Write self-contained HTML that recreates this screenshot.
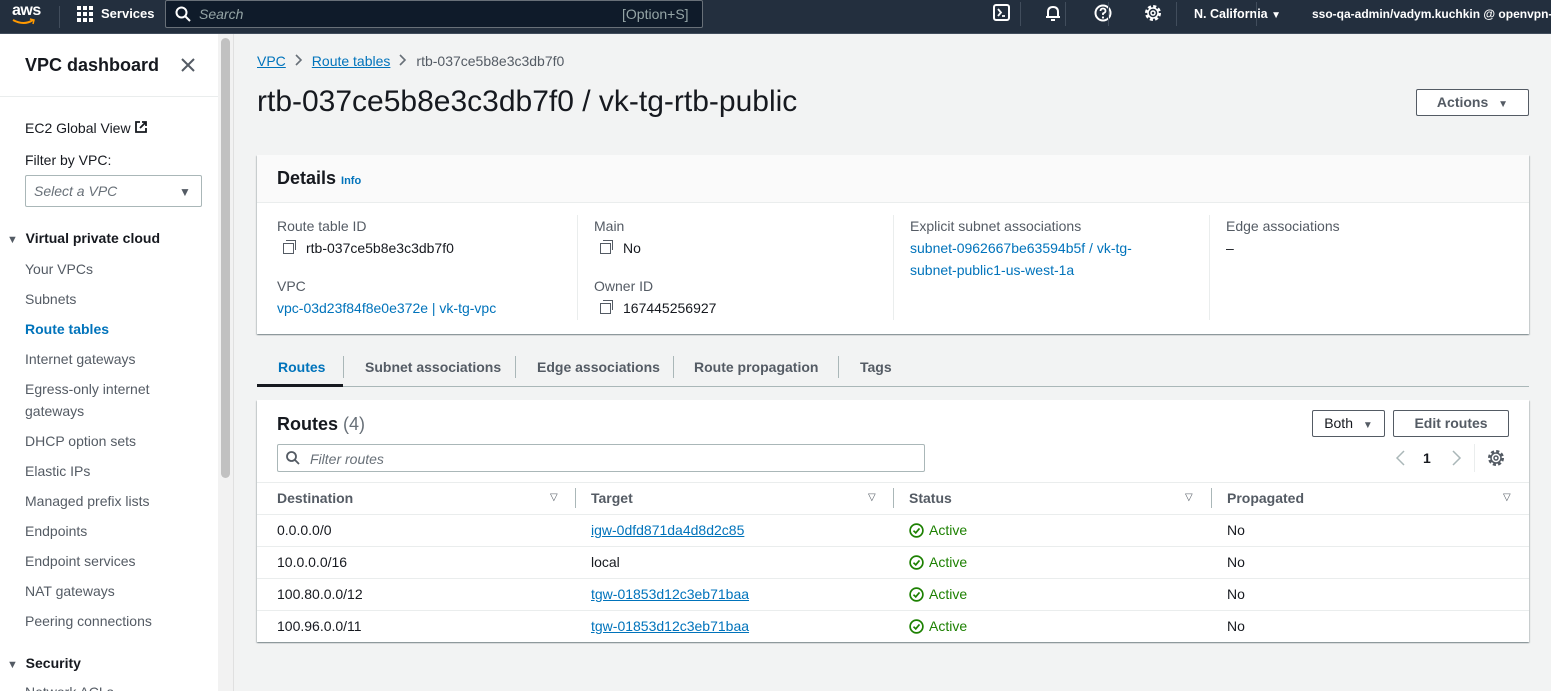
<!DOCTYPE html>
<html><head><meta charset="utf-8"><style>
*{box-sizing:border-box;margin:0;padding:0}
body{width:1551px;height:691px;overflow:hidden;background:#f2f3f3;font-family:"Liberation Sans",sans-serif;font-size:14px;color:#16191f;position:relative}
.a{position:absolute;white-space:nowrap}
.top{position:absolute;left:0;top:0;width:1551px;height:34px;background:#232f3e;border-bottom:1px solid #414d5c;color:#fff}
.lnk{color:#0073bb}
.ul{text-decoration:underline}
.side{position:absolute;left:0;top:34px;width:218px;height:657px;background:#fff;overflow:hidden}
.lbl{color:#545b64}
.b{font-weight:bold}
.sep{position:absolute;width:1px;background:#eaeded}
.card{position:absolute;background:#fff;box-shadow:0 1px 1px rgba(0,28,36,.3),1px 1px 1px rgba(0,28,36,.15),-1px 1px 1px rgba(0,28,36,.15)}
.btn{position:absolute;border:1px solid #545b64;border-radius:2px;background:#fff;font-weight:bold;color:#545b64;text-align:center}
.hl{position:absolute;height:1px;background:#eaeded}
.chk{display:inline-block;width:15px;height:15px;vertical-align:-3px;margin-right:5px}
.cp{display:inline-block;width:11px;height:11px;border:1.5px solid #545b64;position:relative;margin-right:12px;vertical-align:-1px}
.cp:before{content:"";position:absolute;left:2px;top:-4px;width:9px;height:9px;border-top:1.5px solid #545b64;border-right:1.5px solid #545b64}
.tri{font-size:10px;color:#545b64}
.vs{position:absolute;top:2px;width:1px;height:24px;background:#414d5c}
.chev{display:inline-block;margin:0 9px;vertical-align:0}
</style></head><body>
<div class="top">
 <div class="a" style="left:12px;top:2px;font-size:16px;font-weight:bold;letter-spacing:-.5px">aws</div>
 <svg class="a" style="left:12px;top:18px" width="24" height="8"><path d="M1 2 Q12 8 21 2" stroke="#f90" stroke-width="2" fill="none"/><path d="M18 1 L22 2 L21 6" stroke="#f90" stroke-width="1.5" fill="none"/></svg>
 <div class="vs" style="left:59px;top:6px;height:22px"></div>
 <svg class="a" style="left:77px;top:6px" width="16" height="16"><g fill="#fff"><rect x="0" y="0" width="4" height="4"/><rect x="6" y="0" width="4" height="4"/><rect x="12" y="0" width="4" height="4"/><rect x="0" y="6" width="4" height="4"/><rect x="6" y="6" width="4" height="4"/><rect x="12" y="6" width="4" height="4"/><rect x="0" y="12" width="4" height="4"/><rect x="6" y="12" width="4" height="4"/><rect x="12" y="12" width="4" height="4"/></g></svg>
 <div class="a b" style="left:101px;top:6px;font-size:13px">Services</div>
 <div class="a" style="left:165px;top:0;width:538px;height:28px;border:1px solid #687078;border-radius:2px;background:#0f1b2a"></div>
 <svg class="a" style="left:175px;top:6px" width="16" height="16"><circle cx="6.5" cy="6.5" r="5" stroke="#fff" stroke-width="2" fill="none"/><path d="M10 10 L15 15" stroke="#fff" stroke-width="2"/></svg>
 <div class="a" style="left:199px;top:6px;font-style:italic;color:#95a5a6;font-size:14px">Search</div>
 <div class="a" style="left:622px;top:6px;color:#95a5a6;font-size:14px">[Option+S]</div>
 <svg class="a" style="left:993px;top:4px" width="18" height="18"><rect x="1" y="1" width="15" height="15" rx="2" stroke="#fff" stroke-width="2" fill="none"/><path d="M5 5 L8 8.5 L5 12 M9 12 H12" stroke="#fff" stroke-width="1.8" fill="none"/></svg>
 <div class="vs" style="left:1020px"></div>
 <svg class="a" style="left:1044px;top:4px" width="18" height="18"><path d="M4 13 L4 8 Q4 3 9 3 Q14 3 14 8 L14 13 Z M2 13 H16 M7 16 H11" stroke="#fff" stroke-width="2" fill="none"/></svg>
 <div class="vs" style="left:1065px"></div>
 <svg class="a" style="left:1094px;top:4px" width="18" height="18"><circle cx="9" cy="9" r="7.5" stroke="#fff" stroke-width="2" fill="none"/><path d="M6.5 7 Q6.5 4.5 9 4.5 Q11.5 4.5 11.5 7 Q11.5 8.5 9 9.5 V11" stroke="#fff" stroke-width="1.8" fill="none"/><circle cx="9" cy="13.5" r="1.1" fill="#fff"/></svg>
 <div class="vs" style="left:1108px"></div>
 <svg class="a" style="left:1144px;top:4px" width="18" height="18"><circle cx="9" cy="9" r="6.5" stroke="#fff" stroke-width="3" fill="none" stroke-dasharray="3 2.1"/><circle cx="9" cy="9" r="5" stroke="#fff" stroke-width="1.5" fill="none"/><circle cx="9" cy="9" r="2" stroke="#fff" stroke-width="1.5" fill="none"/></svg>
 <div class="vs" style="left:1152px;display:none"></div>
 <div class="vs" style="left:1176px"></div>
 <div class="a b" style="left:1194px;top:7px;font-size:12.5px">N. California <span style="font-size:10px">▼</span></div>
 <div class="vs" style="left:1256px"></div>
 <div class="a b" style="left:1312px;top:7px;font-size:12px">sso-qa-admin/vadym.kuchkin @ openvpn-c</div>
</div>

<div class="side">
 <div class="a b" style="left:25px;top:21px;font-size:18px">VPC dashboard</div>
 <svg class="a" style="left:181px;top:24px" width="14" height="14"><path d="M1 1 L13 13 M13 1 L1 13" stroke="#545b64" stroke-width="2"/></svg>
 <div class="a" style="left:0;top:62px;width:218px;height:1px;background:#eaeded"></div>
 <div class="a" style="left:25px;top:86px">EC2 Global View</div>
 <svg class="a" style="left:134px;top:86px" width="14" height="14"><path d="M6 2 H2 V12 H12 V8 M8 2 H12 V6 M12 2 L6 8" stroke="#16191f" stroke-width="1.8" fill="none"/></svg>
 <div class="a" style="left:25px;top:118px">Filter by VPC:</div>
 <div class="a" style="left:25px;top:141px;width:177px;height:32px;border:1px solid #aab7b8;border-radius:2px"></div>
 <div class="a" style="left:34px;top:149px;font-style:italic;color:#687078">Select a VPC</div>
 <div class="a tri" style="left:179px;top:151px;font-size:12px">▼</div>
 <div class="a b" style="left:7px;top:196px"><span style="font-size:11px;color:#545b64">▼</span> &nbsp;Virtual private cloud</div>
 <div class="a lbl" style="left:25px;top:227px">Your VPCs</div>
 <div class="a lbl" style="left:25px;top:257px">Subnets</div>
 <div class="a b lnk" style="left:25px;top:287px">Route tables</div>
 <div class="a lbl" style="left:25px;top:317px">Internet gateways</div>
 <div class="a lbl" style="left:25px;top:344px;line-height:22px;white-space:normal;width:180px">Egress-only internet gateways</div>
 <div class="a lbl" style="left:25px;top:399px">DHCP option sets</div>
 <div class="a lbl" style="left:25px;top:429px">Elastic IPs</div>
 <div class="a lbl" style="left:25px;top:459px">Managed prefix lists</div>
 <div class="a lbl" style="left:25px;top:489px">Endpoints</div>
 <div class="a lbl" style="left:25px;top:519px">Endpoint services</div>
 <div class="a lbl" style="left:25px;top:549px">NAT gateways</div>
 <div class="a lbl" style="left:25px;top:579px">Peering connections</div>
 <div class="a b" style="left:7px;top:621px"><span style="font-size:11px;color:#545b64">▼</span> &nbsp;Security</div>
 <div class="a lbl" style="left:25px;top:650px">Network ACLs</div>
</div>
<div class="a" style="left:218px;top:34px;width:16px;height:657px;background:#f2f2f2;border-right:1px solid #e0e0e0"></div>
<div class="a" style="left:221px;top:38px;width:9px;height:440px;background:#c1c1c1;border-radius:5px"></div>

<div class="a" style="left:257px;top:53px"><span class="lnk ul">VPC</span><svg class="chev" width="8" height="12"><path d="M1 1 L6 6 L1 11" stroke="#687078" stroke-width="1.6" fill="none"/></svg><span class="lnk ul">Route tables</span><svg class="chev" width="8" height="12"><path d="M1 1 L6 6 L1 11" stroke="#687078" stroke-width="1.6" fill="none"/></svg><span style="color:#545b64">rtb-037ce5b8e3c3db7f0</span></div>
<div class="a" style="left:257px;top:85px;font-size:30px">rtb-037ce5b8e3c3db7f0 / vk-tg-rtb-public</div>
<div class="btn" style="left:1416px;top:89px;width:113px;height:27px;line-height:25px">Actions <span style="font-size:10px;margin-left:6px">▼</span></div>

<div class="card" style="left:257px;top:155px;width:1272px;height:179px">
 <div class="a" style="left:0;top:0;width:1272px;height:48px;background:#fafafa;border-bottom:1px solid #eaeded"></div>
 <div class="a b" style="left:20px;top:13px;font-size:18px">Details <span class="lnk" style="font-size:11px">Info</span></div>
 <div class="sep" style="left:320px;top:60px;height:105px"></div>
 <div class="sep" style="left:636px;top:60px;height:105px"></div>
 <div class="sep" style="left:952px;top:60px;height:105px"></div>
 <div class="a lbl" style="left:20px;top:63px">Route table ID</div>
 <div class="a" style="left:26px;top:85px"><span class="cp"></span>rtb-037ce5b8e3c3db7f0</div>
 <div class="a lbl" style="left:20px;top:123px">VPC</div>
 <div class="a lnk" style="left:20px;top:145px">vpc-03d23f84f8e0e372e | vk-tg-vpc</div>
 <div class="a lbl" style="left:337px;top:63px">Main</div>
 <div class="a" style="left:343px;top:85px"><span class="cp"></span>No</div>
 <div class="a lbl" style="left:337px;top:123px">Owner ID</div>
 <div class="a" style="left:343px;top:145px"><span class="cp"></span>167445256927</div>
 <div class="a lbl" style="left:653px;top:63px">Explicit subnet associations</div>
 <div class="a lnk" style="left:653px;line-height:22px;top:82px">subnet-0962667be63594b5f / vk-tg-<br>subnet-public1-us-west-1a</div>
 <div class="a lbl" style="left:969px;top:63px">Edge associations</div>
 <div class="a" style="left:969px;top:85px">–</div>
</div>

<div class="a" style="left:257px;top:386px;width:1272px;height:1px;background:#aab7b8"></div>
<div class="a b lnk" style="left:278px;top:359px">Routes</div>
<div class="a" style="left:257px;top:384px;width:86px;height:3px;background:#16191f"></div>
<div class="a" style="left:343px;top:356px;width:1px;height:22px;background:#aab7b8"></div>
<div class="a b lbl" style="left:365px;top:359px">Subnet associations</div>
<div class="a" style="left:515px;top:356px;width:1px;height:22px;background:#aab7b8"></div>
<div class="a b lbl" style="left:537px;top:359px">Edge associations</div>
<div class="a" style="left:673px;top:356px;width:1px;height:22px;background:#aab7b8"></div>
<div class="a b lbl" style="left:694px;top:359px">Route propagation</div>
<div class="a" style="left:838px;top:356px;width:1px;height:22px;background:#aab7b8"></div>
<div class="a b lbl" style="left:860px;top:359px">Tags</div>

<div class="card" style="left:257px;top:400px;width:1272px;height:242px">
 <div class="a b" style="left:20px;top:14px;font-size:18px">Routes <span style="font-weight:normal;color:#687078">(4)</span></div>
 <div class="btn" style="left:1055px;top:10px;width:73px;height:27px;line-height:25px;color:#16191f;font-weight:normal">Both <span style="font-size:10px;margin-left:6px;color:#545b64">▼</span></div>
 <div class="btn" style="left:1136px;top:10px;width:116px;height:27px;line-height:25px">Edit routes</div>
 <div class="a" style="left:20px;top:44px;width:648px;height:28px;border:1px solid #aab7b8;border-radius:2px"></div>
 <svg class="a" style="left:29px;top:51px" width="14" height="14"><circle cx="5.5" cy="5.5" r="4.5" stroke="#545b64" stroke-width="1.8" fill="none"/><path d="M9 9 L13 13" stroke="#545b64" stroke-width="1.8"/></svg>
 <div class="a" style="left:53px;top:51px;font-style:italic;color:#687078">Filter routes</div>
 <svg class="a" style="left:1138px;top:50px" width="12" height="16"><path d="M9 1 L2 8 L9 15" stroke="#aab7b8" stroke-width="1.5" fill="none"/></svg>
 <div class="a b" style="left:1166px;top:50px">1</div>
 <svg class="a" style="left:1193px;top:50px" width="12" height="16"><path d="M3 1 L10 8 L3 15" stroke="#aab7b8" stroke-width="1.5" fill="none"/></svg>
 <div class="a" style="left:1217px;top:44px;width:1px;height:28px;background:#eaeded"></div>
 <svg class="a" style="left:1230px;top:49px" width="18" height="18"><circle cx="9" cy="9" r="6.5" stroke="#545b64" stroke-width="3" fill="none" stroke-dasharray="3 2.1"/><circle cx="9" cy="9" r="5" stroke="#545b64" stroke-width="1.5" fill="none"/><circle cx="9" cy="9" r="2" stroke="#545b64" stroke-width="1.5" fill="none"/></svg>
 <div class="hl" style="left:0;top:82px;width:1272px"></div>
 <div class="a b lbl" style="left:20px;top:90px">Destination</div><div class="a tri" style="left:293px;top:92px">▽</div>
 <div class="a" style="left:318px;top:88px;width:1px;height:20px;background:#aab7b8"></div>
 <div class="a b lbl" style="left:334px;top:90px">Target</div><div class="a tri" style="left:611px;top:92px">▽</div>
 <div class="a" style="left:636px;top:88px;width:1px;height:20px;background:#aab7b8"></div>
 <div class="a b lbl" style="left:652px;top:90px">Status</div><div class="a tri" style="left:928px;top:92px">▽</div>
 <div class="a" style="left:954px;top:88px;width:1px;height:20px;background:#aab7b8"></div>
 <div class="a b lbl" style="left:970px;top:90px">Propagated</div><div class="a tri" style="left:1246px;top:92px">▽</div>
 <div class="hl" style="left:0;top:114px;width:1272px"></div>
 <div class="hl" style="left:0;top:146px;width:1272px"></div>
 <div class="hl" style="left:0;top:178px;width:1272px"></div>
 <div class="hl" style="left:0;top:210px;width:1272px"></div>
 <div class="a" style="left:20px;top:122px">0.0.0.0/0</div>
 <div class="a lnk ul" style="left:334px;top:122px">igw-0dfd871da4d8d2c85</div>
 <div class="a" style="left:652px;top:122px;color:#1d8102"><svg class="chk" viewBox="0 0 16 16"><circle cx="8" cy="8" r="6.8" stroke="#1d8102" stroke-width="1.8" fill="none"/><path d="M4.8 8.2 L7.2 10.5 L11.2 5.8" stroke="#1d8102" stroke-width="1.8" fill="none"/></svg>Active</div>
 <div class="a" style="left:970px;top:122px">No</div>
 <div class="a" style="left:20px;top:154px">10.0.0.0/16</div>
 <div class="a" style="left:334px;top:154px">local</div>
 <div class="a" style="left:652px;top:154px;color:#1d8102"><svg class="chk" viewBox="0 0 16 16"><circle cx="8" cy="8" r="6.8" stroke="#1d8102" stroke-width="1.8" fill="none"/><path d="M4.8 8.2 L7.2 10.5 L11.2 5.8" stroke="#1d8102" stroke-width="1.8" fill="none"/></svg>Active</div>
 <div class="a" style="left:970px;top:154px">No</div>
 <div class="a" style="left:20px;top:186px">100.80.0.0/12</div>
 <div class="a lnk ul" style="left:334px;top:186px">tgw-01853d12c3eb71baa</div>
 <div class="a" style="left:652px;top:186px;color:#1d8102"><svg class="chk" viewBox="0 0 16 16"><circle cx="8" cy="8" r="6.8" stroke="#1d8102" stroke-width="1.8" fill="none"/><path d="M4.8 8.2 L7.2 10.5 L11.2 5.8" stroke="#1d8102" stroke-width="1.8" fill="none"/></svg>Active</div>
 <div class="a" style="left:970px;top:186px">No</div>
 <div class="a" style="left:20px;top:218px">100.96.0.0/11</div>
 <div class="a lnk ul" style="left:334px;top:218px">tgw-01853d12c3eb71baa</div>
 <div class="a" style="left:652px;top:218px;color:#1d8102"><svg class="chk" viewBox="0 0 16 16"><circle cx="8" cy="8" r="6.8" stroke="#1d8102" stroke-width="1.8" fill="none"/><path d="M4.8 8.2 L7.2 10.5 L11.2 5.8" stroke="#1d8102" stroke-width="1.8" fill="none"/></svg>Active</div>
 <div class="a" style="left:970px;top:218px">No</div>
</div>
</body></html>
